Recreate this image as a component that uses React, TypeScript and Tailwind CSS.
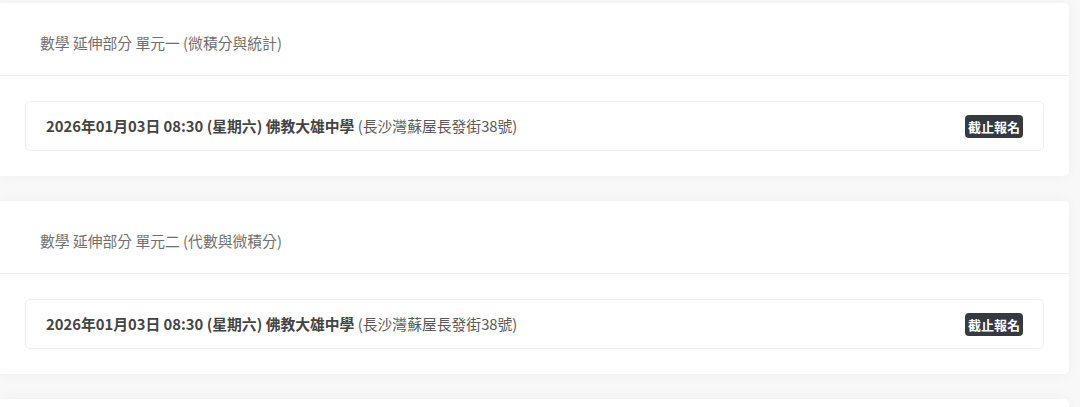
const sessions = [
  {
    title: "數學 延伸部分 單元一 (微積分與統計)",
    when: "2026年01月03日 08:30 (星期六)",
    venue: "佛教大雄中學",
    address: "(長沙灣蘇屋長發街38號)",
  },
  {
    title: "數學 延伸部分 單元二 (代數與微積分)",
    when: "2026年01月03日 08:30 (星期六)",
    venue: "佛教大雄中學",
    address: "(長沙灣蘇屋長發街38號)",
  },
];

const font = { fontFamily: '"Noto Sans CJK TC", "Noto Sans", sans-serif' };

export default function App() {
  return (
    <div className="h-[407px] overflow-hidden bg-[#f8f8f8] pt-[3px]" style={font}>
      <div className="flex flex-col gap-[25px] w-[1069px]">
        {sessions.map((s, i) => (
          <div
            key={i}
            className="bg-white rounded-r-[5px] shadow-[0_0_14px_rgba(0,0,0,0.045)]"
          >
            <div className="h-[73px] flex items-center pl-[40px] pt-[9px] border-b border-[#eef0f4] text-[14.8px] text-[#707070]">
              {s.title}
            </div>
            <div className="px-[25px] py-[25px]">
              <div className="h-[50px] flex items-center justify-between pl-[20px] pr-[20px] border border-[#f0f0f0] rounded-[5px]">
                <div className="text-[14.8px] text-[#5a5a5a]">
                  <span className="font-bold text-[#444]">
                    {s.when} {s.venue}
                  </span>{" "}
                  {s.address}
                </div>
                <span className="bg-[#343a40] text-white text-[13px] font-bold leading-none px-[3px] py-[5px] rounded-[4px]">
                  截止報名
                </span>
              </div>
            </div>
          </div>
        ))}
        <div className="h-[60px] bg-white rounded-r-[5px] shadow-[0_0_14px_rgba(0,0,0,0.045)]" />
      </div>
    </div>
  );
}
